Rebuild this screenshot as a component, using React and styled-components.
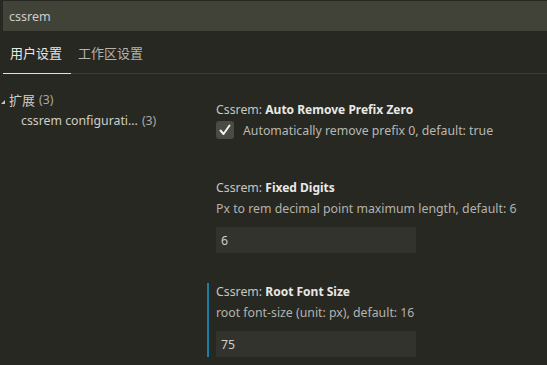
import React from 'react';
import styled, { createGlobalStyle } from 'styled-components';

const GlobalStyle = createGlobalStyle`
  html, body {
    margin: 0;
    padding: 0;
    background: #272822;
    height: 100%;
  }
  body {
    font-family: "Noto Sans", "Noto Sans CJK SC", sans-serif;
    color: #cccccc;
    font-size: 12.3px;
    overflow: hidden;
  }
`;

const Page = styled.div`
  width: 547px;
  height: 365px;
  background: #272822;
  overflow: hidden;
`;

const SearchBox = styled.div`
  margin: 1px 0 0 3px;
  height: 30px;
  background: #414339;
  display: flex;
  align-items: center;
  padding-left: 6px;
  font-size: 12.5px;
  color: #cccccc;
`;

const TabBar = styled.div`
  display: flex;
  height: 42px;
  margin-left: 3px;
  border-bottom: 1px solid #3b3c35;
`;

const Tab = styled.div`
  display: flex;
  align-items: center;
  padding: 0 ${p => (p.$active ? '9px' : '4px')} 0 7px;
  font-size: 13px;
  font-family: "Noto Sans CJK SC", sans-serif;
  color: ${p => (p.$active ? '#e7e7e7' : '#b4b4ae')};
  border-bottom: 1px solid ${p => (p.$active ? '#e0e0e0' : 'transparent')};
  margin-bottom: -1px;
`;

const Body = styled.div`
  display: flex;
`;

const Tree = styled.div`
  width: 207px;
  padding-top: 15px;
  flex-shrink: 0;
`;

const TreeRow = styled.div`
  display: flex;
  align-items: center;
  height: 21px;
  padding-left: ${p => p.$indent}px;
  color: #cfcfca;
  white-space: nowrap;
`;

const Caret = styled.span`
  width: 0;
  height: 0;
  border-left: 4px solid transparent;
  border-bottom: 4px solid #c5c5c5;
  margin: 4px 4px 0 1px;
`;

const Zh = styled.span`
  font-family: "Noto Sans CJK SC", sans-serif;
  font-size: 13px;
`;

const Count = styled.span`
  color: #a8a8a3;
  margin-left: 4px;
`;

const Settings = styled.div`
  flex: 1;
  padding-top: 27px;
  display: flex;
  flex-direction: column;
  gap: 30px;
`;

const Item = styled.div`
  border-left: 2px solid ${p => (p.$focused ? '#197fa5' : 'transparent')};
  padding-left: 7px;
  padding-bottom: ${p => p.$extra || 0}px;
`;

const Title = styled.div`
  line-height: 18px;
  color: #c6c6c2;
  white-space: nowrap;
  b {
    font-weight: 700;
    font-size: 12px;
    color: #e8e8e6;
  }
`;

const Desc = styled.div`
  margin-top: 3px;
  line-height: 18px;
  color: #b3b3ae;
  white-space: nowrap;
`;

const CheckRow = styled.div`
  display: flex;
  align-items: center;
  gap: 9px;
  margin-top: 2px;
  color: #b8b8b3;
  white-space: nowrap;
`;

const Box = styled.span`
  width: 18px;
  height: 18px;
  border-radius: 3px;
  background: #4a4b43;
  display: flex;
  align-items: center;
  justify-content: center;
`;

const Input = styled.div`
  margin-top: 9px;
  width: 200px;
  height: 26px;
  box-sizing: border-box;
  background: #32332d;
  display: flex;
  align-items: center;
  padding-left: 5px;
  color: #d0d0cc;
`;

export default function App() {
  return (
    <Page>
      <GlobalStyle />
      <SearchBox>cssrem</SearchBox>
      <TabBar>
        <Tab $active>用户设置</Tab>
        <Tab>工作区设置</Tab>
      </TabBar>
      <Body>
        <Tree>
          <TreeRow $indent={0}>
            <Caret />
            <Zh>扩展</Zh>
            <Count>(3)</Count>
          </TreeRow>
          <TreeRow $indent={21}>
            cssrem configurati...
            <Count>(3)</Count>
          </TreeRow>
        </Tree>
        <Settings>
          <Item $extra={10}>
            <Title>
              Cssrem: <b>Auto Remove Prefix Zero</b>
            </Title>
            <CheckRow>
              <Box>
                <svg width="14" height="14" viewBox="0 0 14 14">
                  <path d="M2.5 7.5 L5.5 11 L11.5 2.5" fill="none" stroke="#f0f0f0" strokeWidth="2" strokeLinecap="round" strokeLinejoin="round" />
                </svg>
              </Box>
              Automatically remove prefix 0, default: true
            </CheckRow>
          </Item>
          <Item>
            <Title>
              Cssrem: <b>Fixed Digits</b>
            </Title>
            <Desc>Px to rem decimal point maximum length, default: 6</Desc>
            <Input>6</Input>
          </Item>
          <Item $focused>
            <Title>
              Cssrem: <b>Root Font Size</b>
            </Title>
            <Desc>root font-size (unit: px), default: 16</Desc>
            <Input>75</Input>
          </Item>
        </Settings>
      </Body>
    </Page>
  );
}
